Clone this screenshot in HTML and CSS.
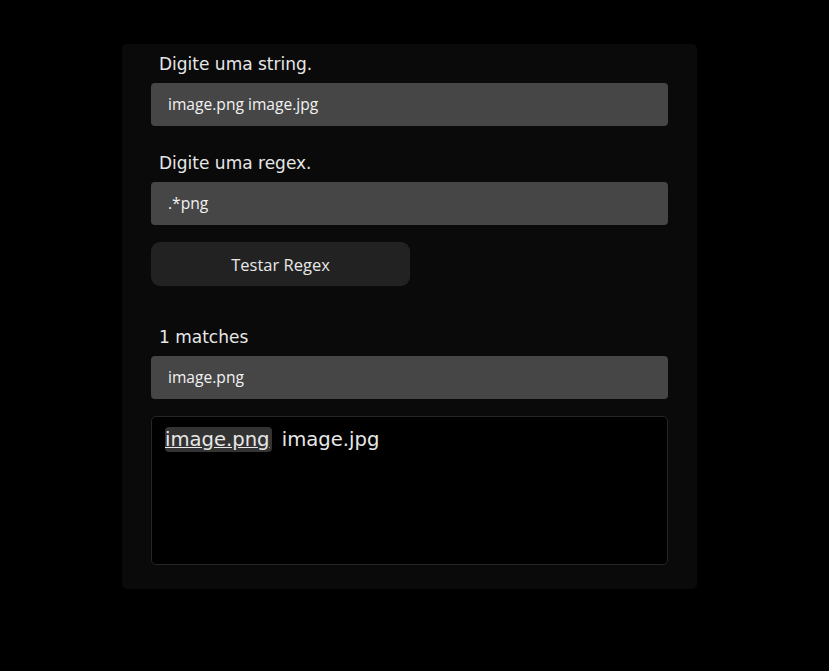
FILE: index.html
```html
<!DOCTYPE html>
<html lang="pt">
<head>
<meta charset="utf-8">
<title>Regex</title>
<link rel="stylesheet" href="styles.css">
</head>
<body>
<main class="card">
  <div class="group">
    <label class="label">Digite uma string.</label>
    <div class="field">image.png image.jpg</div>
  </div>
  <div class="group">
    <label class="label">Digite uma regex.</label>
    <div class="field">.*png</div>
  </div>
  <button class="btn">Testar Regex</button>
  <div class="group matches">
    <label class="label">1 matches</label>
    <div class="field">image.png</div>
  </div>
  <div class="result"><span class="hl">image.png</span> image.jpg</div>
</main>
</body>
</html>
```
FILE: styles.css
```css
html, body {
  margin: 0;
  padding: 0;
  background: #000;
}
body {
  padding-top: 44px;
  padding-left: 122px;
  font-family: "DejaVu Sans", sans-serif;
}
.card {
  width: 575px;
  height: 545px;
  box-sizing: border-box;
  background: #0a0a0a;
  border-radius: 5px;
  padding: 8px 29px 24px;
  display: flex;
  flex-direction: column;
}
.group {
  display: flex;
  flex-direction: column;
  gap: 7px;
  margin-bottom: 25px;
}
.label {
  display: block;
  color: #e6e6e6;
  font-size: 17px;
  line-height: 24px;
  padding-left: 8px;
}
.field {
  height: 43px;
  box-sizing: border-box;
  background: #464646;
  border-radius: 4px;
  color: #f2f2f2;
  font-family: "Open Sans", "Noto Sans", sans-serif;
  font-size: 15.6px;
  line-height: 43px;
  padding-left: 17px;
}
.btn {
  width: 259px;
  height: 44px;
  background: #222;
  border: none;
  border-radius: 9px;
  color: #e8e8e8;
  font-family: "Open Sans", "Noto Sans", sans-serif;
  font-size: 16.5px;
  margin-top: -8px;
  margin-bottom: 39px;
  padding: 0;
}
.matches {
  margin-bottom: 17px;
}
.result {
  height: 149px;
  box-sizing: border-box;
  background: #000;
  border: 1px solid #262626;
  border-radius: 5px;
  padding: 9px 13px;
  color: #e8e8e8;
  font-size: 19.6px;
  line-height: 28px;
}
.hl {
  background: #333;
  border-radius: 4px;
  text-decoration: underline;
  padding: 1px 2px 1px 0;
  margin-right: 4px;
}
```
